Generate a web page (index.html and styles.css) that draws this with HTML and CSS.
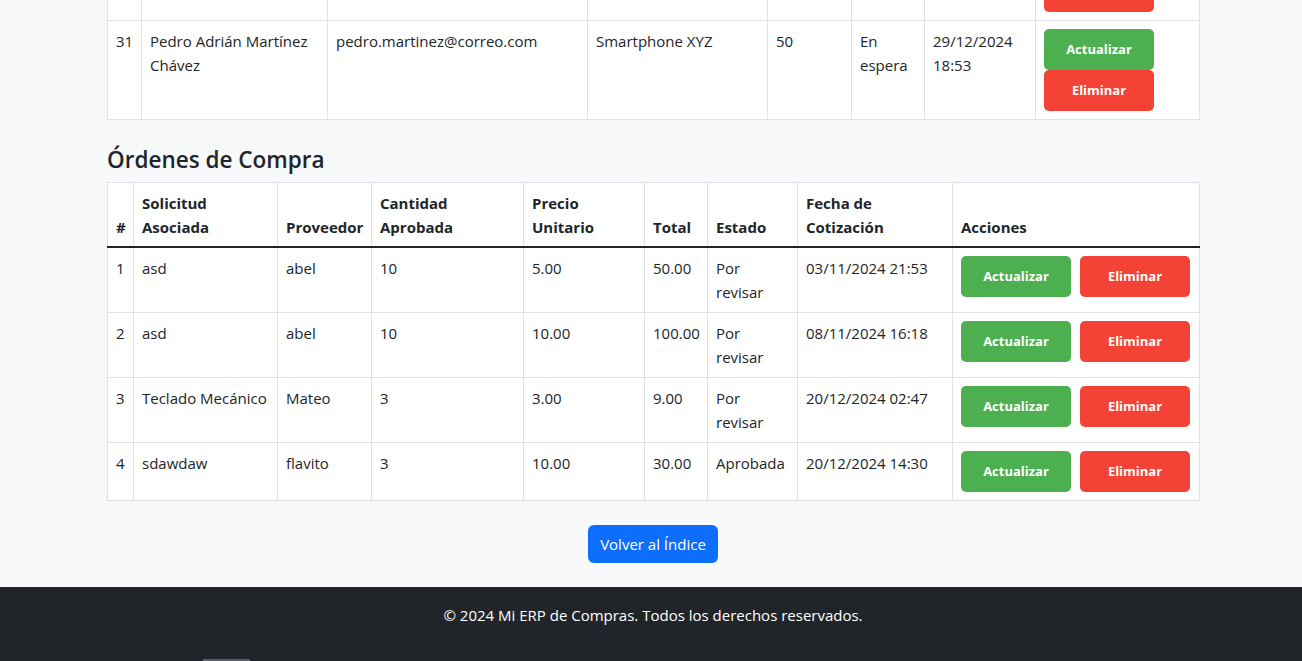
FILE: index.html
```html
<!DOCTYPE html>
<html lang="es">
<head>
<meta charset="utf-8">
<title>Mi ERP de Compras</title>
<link rel="stylesheet" href="styles.css">
</head>
<body>
<main class="main">
  <div class="container">
    <table class="data-table table-solicitudes">
      <colgroup>
        <col class="w34"><col class="w186"><col class="w260"><col class="w180"><col class="w84"><col class="w73"><col class="w111"><col class="w164">
      </colgroup>
      <tbody>
        <tr>
          <td></td>
          <td></td>
          <td></td>
          <td></td>
          <td></td>
          <td></td>
          <td></td>
          <td><div class="actions-stack"><span class="btn-act btn-update"></span><span class="btn-act btn-delete"></span></div></td>
        </tr>
        <tr>
          <td>31</td>
          <td>Pedro Adrián Martínez Chávez</td>
          <td>pedro.martinez@correo.com</td>
          <td>Smartphone XYZ</td>
          <td>50</td>
          <td>En espera</td>
          <td>29/12/2024 18:53</td>
          <td><div class="actions-stack"><a class="btn-act btn-update">Actualizar</a><a class="btn-act btn-delete">Eliminar</a></div></td>
        </tr>
      </tbody>
    </table>

    <h2 class="section-title">Órdenes de Compra</h2>
    <table class="data-table">
      <colgroup>
        <col class="w26"><col class="w144"><col class="w94"><col class="w152"><col class="w121"><col class="w63"><col class="w90"><col class="w155"><col class="w247">
      </colgroup>
      <thead>
        <tr>
          <th>#</th>
          <th>Solicitud Asociada</th>
          <th>Proveedor</th>
          <th>Cantidad Aprobada</th>
          <th>Precio Unitario</th>
          <th>Total</th>
          <th>Estado</th>
          <th>Fecha de Cotización</th>
          <th>Acciones</th>
        </tr>
      </thead>
      <tbody>
        <tr>
          <td>1</td><td>asd</td><td>abel</td><td>10</td><td>5.00</td><td>50.00</td><td>Por revisar</td><td>03/11/2024 21:53</td>
          <td><div class="actions-row"><a class="btn-act btn-update">Actualizar</a><a class="btn-act btn-delete">Eliminar</a></div></td>
        </tr>
        <tr>
          <td>2</td><td>asd</td><td>abel</td><td>10</td><td>10.00</td><td>100.00</td><td>Por revisar</td><td>08/11/2024 16:18</td>
          <td><div class="actions-row"><a class="btn-act btn-update">Actualizar</a><a class="btn-act btn-delete">Eliminar</a></div></td>
        </tr>
        <tr>
          <td>3</td><td>Teclado Mecánico</td><td>Mateo</td><td>3</td><td>3.00</td><td>9.00</td><td>Por revisar</td><td>20/12/2024 02:47</td>
          <td><div class="actions-row"><a class="btn-act btn-update">Actualizar</a><a class="btn-act btn-delete">Eliminar</a></div></td>
        </tr>
        <tr>
          <td>4</td><td>sdawdaw</td><td>flavito</td><td>3</td><td>10.00</td><td>30.00</td><td>Aprobada</td><td>20/12/2024 14:30</td>
          <td><div class="actions-row"><a class="btn-act btn-update">Actualizar</a><a class="btn-act btn-delete">Eliminar</a></div></td>
        </tr>
      </tbody>
    </table>

    <div class="back-wrap">
      <a class="btn-primary">Volver al Índice</a>
    </div>
  </div>
</main>
<footer class="footer">
  <p class="footer-text">© 2024 Mi ERP de Compras. Todos los derechos reservados.</p>
  <div class="footer-extra"></div>
</footer>
</body>
</html>
```

FILE: styles.css
```css
* { box-sizing: border-box; }

body {
  margin: 0;
  background: #f8f9fa;
  color: #212529;
  font-family: "Open Sans", "Noto Sans", sans-serif;
  font-size: 15px;
  line-height: 24px;
}

.main {
  padding-left: 4px;
  padding-bottom: 24px;
}

.container {
  width: 1092px;
  margin: 0 auto;
}

.data-table {
  width: 1092px;
  border-collapse: collapse;
  table-layout: fixed;
  background: #fff;
  margin-bottom: 16px;
}

.table-solicitudes {
  margin-top: -79px;
}

.data-table th,
.data-table td {
  border: 1px solid #dee2e6;
  padding: 8px;
  vertical-align: top;
  text-align: left;
}

.data-table thead th {
  vertical-align: bottom;
  font-weight: 700;
  padding-bottom: 7px;
  border-bottom: 2px solid #212529;
}

.w26 { width: 26px; }
.w34 { width: 34px; }
.w63 { width: 63px; }
.w73 { width: 73px; }
.w84 { width: 84px; }
.w90 { width: 90px; }
.w94 { width: 94px; }
.w111 { width: 111px; }
.w121 { width: 121px; }
.w144 { width: 144px; }
.w152 { width: 152px; }
.w155 { width: 155px; }
.w164 { width: 164px; }
.w180 { width: 180px; }
.w186 { width: 186px; }
.w247 { width: 247px; }
.w260 { width: 260px; }

.actions-stack {
  display: flex;
  flex-direction: column;
  align-items: flex-start;
}

.actions-row {
  display: flex;
  gap: 9px;
}

.btn-act {
  display: flex;
  align-items: center;
  justify-content: center;
  width: 110px;
  height: 41px;
  border-radius: 5px;
  color: #fff;
  font-weight: 700;
  font-size: 13px;
  line-height: 1;
}

.btn-update { background: #4caf50; }
.btn-delete { background: #f44336; }

.section-title {
  margin: 26px 0 9px;
  font-size: 22.5px;
  font-weight: 600;
  line-height: 27px;
}

.back-wrap {
  display: flex;
  justify-content: center;
  padding-top: 8px;
}

.btn-primary {
  display: inline-block;
  background: #0d6efd;
  color: #fff;
  padding: 7px 12px;
  line-height: 24px;
  height: 38px;
  border-radius: 6px;
  font-size: 15px;
}

.footer {
  background: #212529;
  color: #fff;
  padding: 16px 0 0 4px;
  height: 120px;
}

.footer-text {
  margin: 0;
  text-align: center;
}

.footer-extra {
  margin-top: 32px;
  margin-left: 199px;
  width: 47px;
  height: 10px;
  background: #5b5f65;
}
```
